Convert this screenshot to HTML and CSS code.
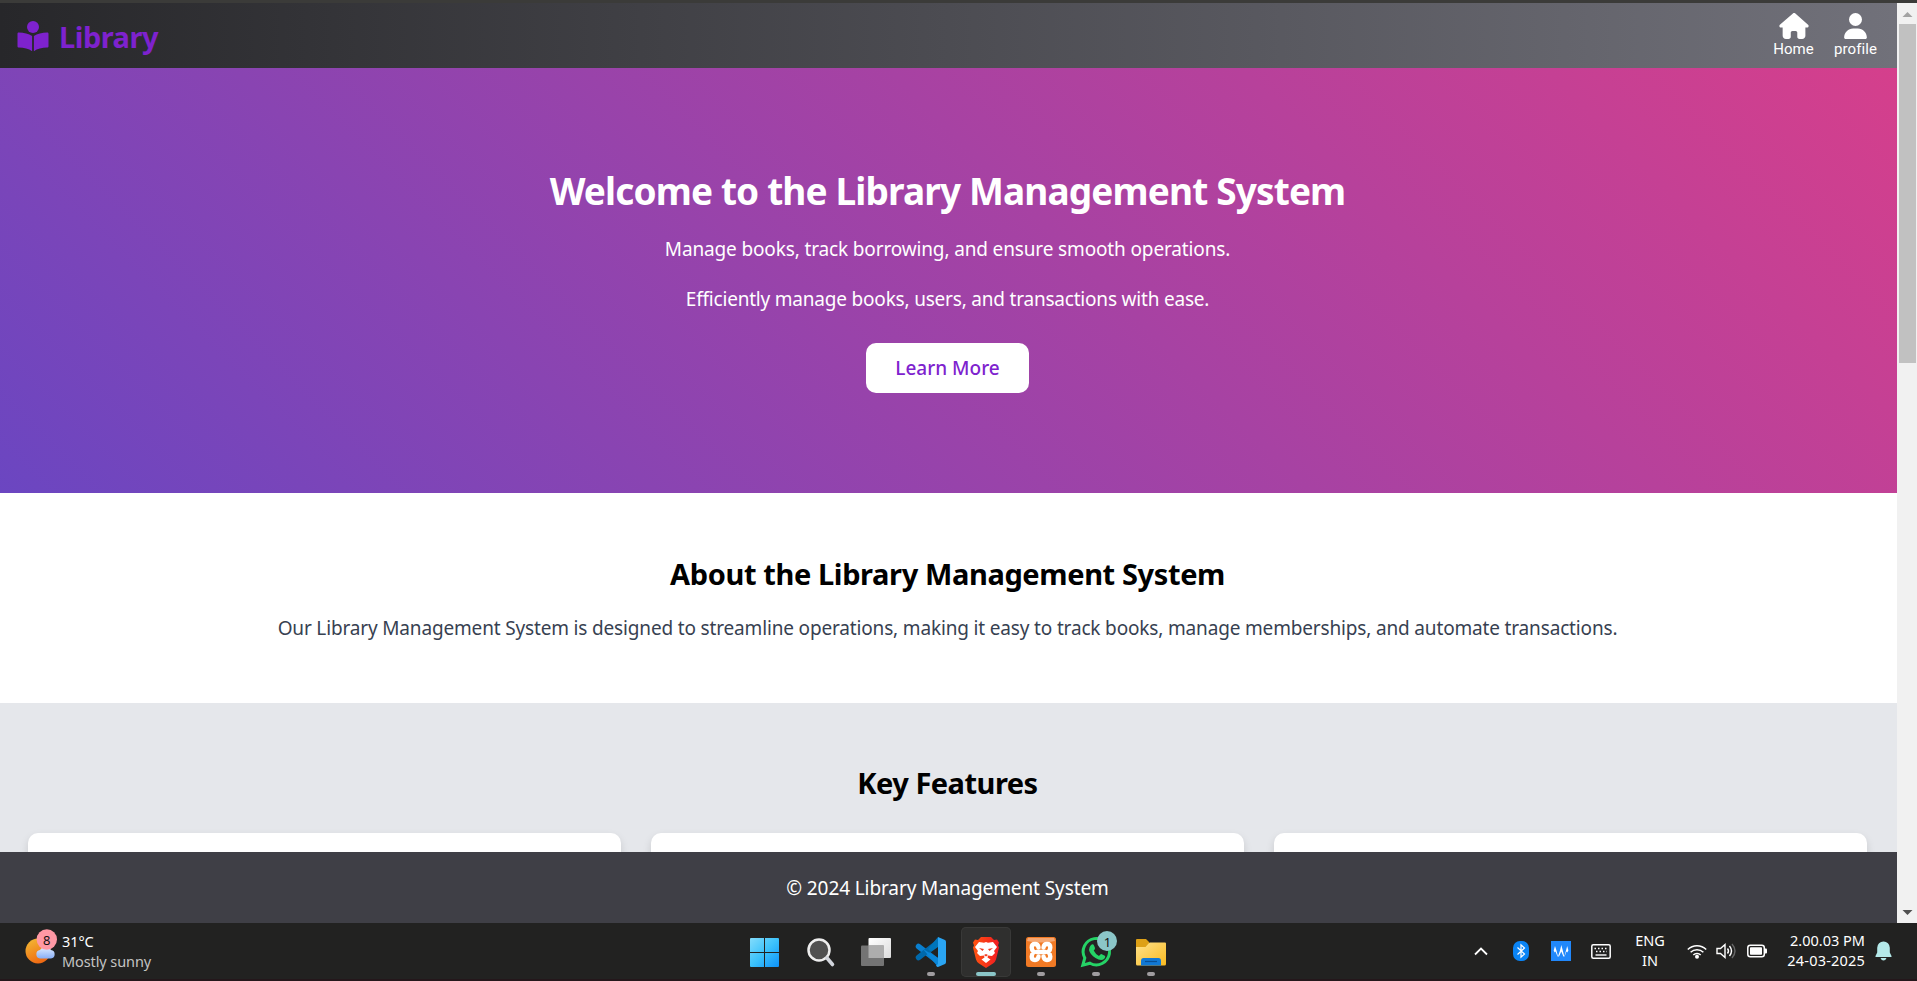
FILE: index.html
```
<!DOCTYPE html>
<html lang="en">
<head>
<meta charset="utf-8">
<title>Library Management System</title>
<link rel="stylesheet" href="styles.css">
</head>
<body>
<div class="screen">
  <div class="window-edge"></div>
  <div class="window">
    <div class="page">
      <header class="header">
        <div class="brand">
          <svg class="brand-icon" viewBox="0 0 32 31"><circle cx="16" cy="6" r="6"/><path d="M15.1 30.2C11.8 27.8 7 26.8 1.8 26.6 1 26.6.5 26 .5 25.300V12.800C.5 12 1 11.500 1.800 11.500 7 11.600 11.800 12.700 15.100 15zM16.900 30.200C20.200 27.800 25 26.800 30.200 26.600 31 26.600 31.500 26 31.500 25.300V12.800C31.500 12 31 11.500 30.200 11.500 25 11.600 20.200 12.700 16.900 15z"/></svg>
          <span class="brand-name">Library</span>
        </div>
        <nav class="nav">
          <a class="nav-item"><svg class="nav-icon home" viewBox="0 0 576 512"><path d="M575.800 255.500c0 18-15 32.100-32 32.100h-32l.7 160.200c0 35-28 64.200-64 64.200h-52c-26 0-44-18-44-44v-84c0-18-14-32-32-32h-64c-18 0-32 14-32 32v84c0 26-18 44-44 44h-52c-36 0-64-28-64-64V287.600H32c-18 0-32-14-32-32.100 0-9 3-17 10-24L266.400 8c7-7 15-8 22-8s15 2 21 7l255.400 224.500c8 7 12 15 11 24z"/></svg><span>Home</span></a>
          <a class="nav-item"><svg class="nav-icon user" viewBox="0 0 448 512"><path d="M224 256a128 128 0 1 0 0-256 128 128 0 1 0 0 256zm-45.700 48C79.800 304 0 383.800 0 482.300 0 498.700 13.300 512 29.700 512h388.600c16.400 0 29.700-13.300 29.700-29.700C448 383.800 368.200 304 269.700 304z"/></svg><span>profile</span></a>
        </nav>
      </header>
      <section class="hero">
        <h1 class="hero-title">Welcome to the Library Management System</h1>
        <p class="hero-text first">Manage books, track borrowing, and ensure smooth operations.</p>
        <p class="hero-text second">Efficiently manage books, users, and transactions with ease.</p>
        <a class="button">Learn More</a>
      </section>
      <section class="about">
        <h2 class="about-title">About the Library Management System</h2>
        <p class="about-text">Our Library Management System is designed to streamline operations, making it easy to track books, manage memberships, and automate transactions.</p>
      </section>
      <section class="features">
        <h2 class="features-title">Key Features</h2>
        <div class="cards"><div class="card"></div><div class="card"></div><div class="card"></div></div>
      </section>
      <footer class="footer"><span>© 2024 Library Management System</span></footer>
    </div>
    <div class="scrollbar">
      <svg class="scroll-arrow" viewBox="0 0 20 21"><path fill="#a3a3a3" d="M5.500 14h10L10.500 9z"/></svg>
      <div class="thumb"></div>
      <svg class="scroll-arrow end" viewBox="0 0 20 21"><path fill="#505050" d="M5.500 8h10L10.500 13z"/></svg>
    </div>
  </div>
  <div class="taskbar">
    <div class="weather">
      <svg class="weather-icon" viewBox="0 0 34 36">
        <defs><linearGradient id="sun" x1="0" y1="0" x2=".5" y2="1"><stop offset="0" stop-color="#f3bd35"/><stop offset="1" stop-color="#ef6a13"/></linearGradient><linearGradient id="cloud" x1="0" y1="0" x2="0" y2="1"><stop offset="0" stop-color="#e0ecff"/><stop offset="1" stop-color="#88aef5"/></linearGradient></defs>
        <circle cx="13" cy="22" r="12.500" fill="url(#sun)"/><path fill="url(#cloud)" d="M15 29.500a4.300 4.300 0 0 1 0-8.500 6.500 6.500 0 0 1 11 0 4.300 4.300 0 0 1 0 8.500z"/><circle cx="21.800" cy="10.500" r="10.200" fill="#ff98a4"/><text x="21.800" y="15.500" text-anchor="middle" class="badge-text">8</text>
      </svg>
      <div class="weather-text"><span>31°C</span><span class="muted">Mostly sunny</span></div>
    </div>
    <div class="apps">
      <div class="app start"><svg viewBox="0 0 50 50"><defs><linearGradient id="win" x1="0" y1="0" x2="1" y2="1"><stop offset="0" stop-color="#83dcfb"/><stop offset=".5" stop-color="#3cc2fb"/><stop offset="1" stop-color="#0d91f8"/></linearGradient></defs><path fill="url(#win)" d="M12 11h13v14H11v-13q0-1 1-1zM26 11h13q1 0 1 1v13H26zM11 26H25v14H12q-1 0-1-1zM26 26h14v13q0 1-1 1H26z"/></svg></div>
      <div class="app"><svg viewBox="0 0 50 50"><circle cx="23" cy="23" r="10.500" fill="#505050" stroke="#eee" stroke-width="2.500"/><path stroke="#d2d5dc" stroke-width="3.600" stroke-linecap="round" d="M31 31l5.500 6.500"/></svg></div>
      <div class="app"><svg viewBox="0 0 50 50"><defs><linearGradient id="tv" x1="0" y1="0" x2="1" y2="1"><stop offset="0" stop-color="#fff"/><stop offset="1" stop-color="#dcdcdc"/></linearGradient></defs><rect x="17.500" y="11" width="22.500" height="20" rx="1" fill="url(#tv)"/><rect x="10" y="18.500" width="23" height="20.500" rx="1" fill="#747474"/><path fill="#adadad" d="M17.500 18.500H33v12.500H17.500z"/></svg></div>
      <div class="app"><svg viewBox="0 0 50 50"><path d="M12.500 19.500L32 34.500" stroke="#0a7fcf" stroke-width="5.500" stroke-linecap="round"/><path d="M12.500 30.500L33 14.500" stroke="#0069ac" stroke-width="5.500" stroke-linecap="round"/><path fill="#0075bb" d="M22 22L32 10v10l-7 5z"/><path fill="#0a86d8" d="M17 22L32 31v9z"/><path fill="#2aa5f3" d="M32 10l7 3q1 .6 1 2v20q0 1.400-1 2l-7 3q-1 0-2-1.500l2-1.500z"/></svg><i class="dot"></i></div>
      <div class="app active"><svg viewBox="0 0 50 50"><defs><linearGradient id="lion" x1="0" y1="0" x2="1" y2="0"><stop offset="0" stop-color="#ff5410"/><stop offset="1" stop-color="#f01a22"/></linearGradient></defs><path fill="url(#lion)" d="M20 10h10l3 3 3-.5 2 3-1 3 1 2-3 12q-1 3-3 4l-7 4.500-7-4.500q-2-1-3-4l-3-12 1-2-1-3 2-3 3 .5z"/><path fill="#fff" d="M18 15l5 .7 2-.7 2 .7 5-.7 4 5-3 4 1 2-3 3-4-.5-.5 2 3 2-4.500 3.500-4.500-3.500 3-2-.5-2-4 .5-3-3 1-2-3-4z"/><path fill="#f03b20" d="M18 21l5 1-1.500 2zM32 21l-5 1 1.500 2zM23 28l2-1 2 1-2 1.500z"/></svg><i class="dot"></i></div>
      <div class="app"><svg viewBox="0 0 50 50"><rect x="10" y="10" width="30" height="30" rx="2.500" fill="#f17a25"/><path fill="#f6a772" d="M12 11h26l1 3q-14 3-28 0z"/><g fill="none" stroke="#fff" stroke-width="4.400" stroke-linecap="round" stroke-linejoin="round"><path d="M20.500 25h9"/><path d="M22.500 20.500q-.5-3.500-3.500-3.500-3.300 0-3.300 3.500 0 2.500 2 4.500-2 2-2 4.500 0 3.500 3.300 3.500 3 0 3.500-3.500M27.500 20.500q.5-3.500 3.500-3.500 3.300 0 3.300 3.500 0 2.500-2 4.500 2 2 2 4.500 0 3.500-3.300 3.500-3 0-3.500-3.500"/></g></svg><i class="dot"></i></div>
      <div class="app"><svg viewBox="0 0 50 50"><path fill="#242424" stroke="#25d366" stroke-width="3" d="M11.800 38.200l2-7.200a13.200 13.200 0 1 1 5.200 5.200z"/><path fill="#25d366" d="M20 18q2-1.800 3 .5l1 2.500q.3 1-1.300 2.500 2 4 5.300 5.500 1.800-2.300 2.800-1.800l3 1.500q1.200.8-.8 3.300-3 2.500-8.500-1t-6.500-8q0-3 2-5z"/><circle cx="36" cy="14" r="10" fill="#8bc6c8"/><text x="36.500" y="19.500" text-anchor="middle" class="badge-text">1</text></svg><i class="dot"></i></div>
      <div class="app"><svg viewBox="0 0 50 50"><defs><linearGradient id="fold" x1="0" y1="0" x2="1" y2="1"><stop offset="0" stop-color="#ffe28b"/><stop offset="1" stop-color="#f9ba20"/></linearGradient></defs><path fill="#dda016" d="M10 13q0-1 1-1h9l3 3v6H10z"/><path fill="url(#fold)" d="M10 20h9.500l4-4.500H39q1 0 1 1V37q0 1.500-1.500 1.500h-27Q10 38.500 10 37z"/><path fill="#1178d4" d="M15 38.500V34q0-3 2.500-3h15q2.500 0 2.500 3v4.500z"/><path stroke="#084e93" stroke-width="1.200" d="M19 34.500h12"/></svg><i class="dot"></i></div>
    </div>
    <div class="tray">
      <svg class="chevron" viewBox="0 0 16 10"><path d="M2 8.500l6-6 6 6" fill="none" stroke="#fff" stroke-width="1.800"/></svg>
      <svg class="bluetooth" viewBox="0 0 16 20"><rect width="16" height="20" rx="7" fill="#0a84f5"/><path d="M4.500 6.500l7 6.500-3.500 3.200V3.800L11.500 7l-7 6.500" fill="none" stroke="#fff" stroke-width="1.200"/></svg>
      <svg class="wave" viewBox="0 0 20 20"><path fill="#2188fb" d="M0 0h20v20H0z"/><path fill="#fff" d="M2.700 9.500L4 5l1.500 4.500L7 15.500 9 9.500 10.300 4l1.500 5.500 1.500 6 1.700-6L16.200 5l1.200 4.500-1.200 2-.8-1-1.800 5h-1.200L10.300 10.500 8 15.500H6.500L4.500 10.500l-.8 1z"/></svg>
      <svg class="keyboard" viewBox="0 0 20 15"><rect x=".8" y=".8" width="18.400" height="13.400" rx="1.500" fill="none" stroke="#fff" stroke-width="1.500"/><path stroke="#fff" stroke-width="1.500" stroke-dasharray="1.500 2" d="M3.500 4.500H17M5 7.500h11"/><path stroke="#fff" stroke-width="1.400" d="M4.500 11h11"/></svg>
      <div class="language"><span>ENG</span><span>IN</span></div>
      <svg class="wifi" viewBox="0 0 20 16"><g fill="none" stroke="#fff" stroke-width="1.500"><path d="M.8 6.500a13 13 0 0 1 18.400 0M3.600 9.300a9 9 0 0 1 12.800 0M6.300 12a5.200 5.200 0 0 1 7.400 0"/></g><circle cx="10" cy="13.800" r="2" fill="#fff"/></svg>
      <svg class="volume" viewBox="0 0 20 18"><g fill="none" stroke="#fff" stroke-width="1.400"><path d="M1 6.500h3.500L9 2.500v13L4.500 11.500H1zM11.500 6.500q2 2.500 0 5M13.500 4q4 5 0 10"/><path stroke="#666" d="M16 2q6 7 0 14"/></g></svg>
      <svg class="battery" viewBox="0 0 20 14"><rect x=".8" y="1.200" width="16.500" height="11.600" rx="2.500" fill="none" stroke="#fff" stroke-width="1.500"/><rect x="3" y="3.200" width="12" height="7.600" rx=".8" fill="#fff"/><path fill="#fff" d="M18 4.500h1q1 0 1 1v3q0 1-1 1h-1z"/></svg>
      <div class="clock"><span class="time">2.00.03 PM</span><span class="date">24-03-2025</span></div>
      <svg class="bell" viewBox="0 0 17 20"><path fill="#b4e9e9" d="M8.500.5a6.200 6.200 0 0 1 6.300 6.200v4.800L16.500 15v1H.5v-1l1.700-3.500V6.700A6.200 6.200 0 0 1 8.500.5zM5.500 17h6q-1 2.500-3 2.500T5.500 17z"/></svg>
    </div>
  </div>
</div>
</body>
</html>
```
FILE: styles.css
```
* { box-sizing: border-box; }
body { margin: 0; font-family: "Noto Sans", "Open Sans", sans-serif; overflow: hidden; }
h1, h2, p { margin: 0; white-space: nowrap; }
svg { display: block; flex: none; }
.screen { width: 1917px; height: 981px; display: flex; flex-direction: column; overflow: hidden; }
.window-edge { height: 3px; background: #3b3b39; flex: none; }
.window { height: 920px; flex: none; display: flex; }
.page { width: 1897px; height: 920px; display: flex; flex-direction: column; overflow: hidden; }
.page > * { width: 1897px; }

.header { height: 65px; flex: none; display: flex; justify-content: space-between; background: linear-gradient(to right, #27272a, #71717a); }
.brand { display: flex; align-items: flex-start; gap: 10px; padding: 18px 0 0 17px; color: #7e22ce; }
.brand-icon { width: 32px; height: 31px; fill: #7e22ce; }
.brand-name { font-size: 29px; font-weight: 700; line-height: 36px; margin-top: -2px; letter-spacing: -0.5px; }
.nav { display: flex; gap: 20px; padding: 10px 20px 0 0; color: #fff; }
.nav-item { display: flex; flex-direction: column; align-items: center; font: 15px/20px Roboto, sans-serif; letter-spacing: 0.1px; }
.nav-icon { height: 26px; fill: #fff; }
.home { width: 30px; }
.user { width: 23px; }

.hero { height: 425px; flex: none; display: flex; flex-direction: column; align-items: center; padding-top: 95px; padding-right: 2px; color: #fff; background: linear-gradient(45deg, #6b46c1, #d53f8c); }
.hero-title { font-size: 37px; line-height: 56px; letter-spacing: -0.86px; }
.hero-text { font-size: 19px; line-height: 30px; letter-spacing: -0.14px; }
.first { margin-top: 15px; }
.second { margin-top: 20px; letter-spacing: -0.2px; }
.button { width: 163px; height: 50px; margin-top: 29px; border-radius: 10px; background: #fff; color: #7e22ce; font-size: 19px; font-weight: 500; line-height: 51px; text-align: center; white-space: nowrap; }

.about { height: 210px; flex: none; display: flex; flex-direction: column; align-items: center; padding-top: 59px; padding-right: 2px; background: #fff; }
.about-title, .features-title { font-size: 29px; line-height: 44px; color: #000; letter-spacing: -0.38px; }
.about-text { font-size: 19px; line-height: 30px; margin-top: 17px; color: #374151; letter-spacing: -0.16px; }

.features { height: 149px; flex: none; overflow: hidden; padding: 58px 30px 0 28px; background: #e5e7eb; }
.features-title { text-align: center; letter-spacing: -0.5px; }
.cards { display: grid; grid-template-columns: repeat(3, 1fr); gap: 30px; margin-top: 28px; }
.card { height: 160px; border-radius: 10px; background: #fff; box-shadow: 0 4px 8px rgba(0, 0, 0, .13); }

.footer { height: 71px; flex: none; display: flex; align-items: center; justify-content: center; padding-right: 2px; background: #3f3f46; color: #fff; font-size: 19px; letter-spacing: -0.1px; }

.scrollbar { width: 20px; background: #f1f1f1; display: flex; flex-direction: column; align-items: center; }
.scroll-arrow { width: 20px; height: 21px; }
.thumb { width: 17px; height: 339px; background: #c1c1c1; }
.end { margin-top: auto; }

.taskbar { height: 58px; flex: none; display: flex; position: relative; justify-content: space-between; color: #fff; background: #222221; border-bottom: 2px solid #24171b; }
.weather { display: flex; gap: 3px; padding: 6px 0 0 25px; }
.weather-icon { width: 34px; height: 36px; }
.weather-text { display: flex; flex-direction: column; font-size: 14.500px; line-height: 20px; padding-top: 2px; letter-spacing: -0.1px; white-space: nowrap; }
.muted { color: #c4c4c4; }
.badge-text { font: 13px "Noto Sans", sans-serif; fill: #111; }
.apps { position: absolute; left: 739px; top: 4px; display: flex; gap: 5px; }
.app { position: relative; width: 50px; height: 50px; border-radius: 5px; }
.start { margin-right: 2px; }
.app svg { width: 50px; height: 50px; fill: none; }
.active { background: #2f2f2e; box-shadow: inset 0 0 0 1px #393938; }
.dot { position: absolute; left: 21px; bottom: 1px; width: 8px; height: 4px; border-radius: 2px; background: #a09da0; }
.active .dot { left: 15px; width: 20px; background: #8bc6c8; }
.tray { display: flex; align-items: center; padding-right: 25px; font-size: 14.500px; line-height: 20px; white-space: nowrap; }
.chevron { width: 16px; height: 10px; margin-right: 24px; }
.bluetooth { width: 16px; height: 20px; margin-right: 22px; }
.wave { width: 20px; height: 20px; margin-right: 20px; }
.keyboard { width: 20px; height: 15px; margin-right: 19px; }
.language { width: 40px; display: flex; flex-direction: column; align-items: center; margin: -2px 17px 0 0; }
.wifi { width: 20px; height: 16px; margin-right: 9px; }
.volume { width: 20px; height: 18px; margin-right: 11px; }
.battery { width: 20px; height: 14px; margin-right: 18px; }
.clock { width: 80px; display: flex; flex-direction: column; align-items: flex-end; margin: -2px 10px 0 0; }
.date { letter-spacing: 0.2px; }
.bell { width: 17px; height: 20px; }
```
